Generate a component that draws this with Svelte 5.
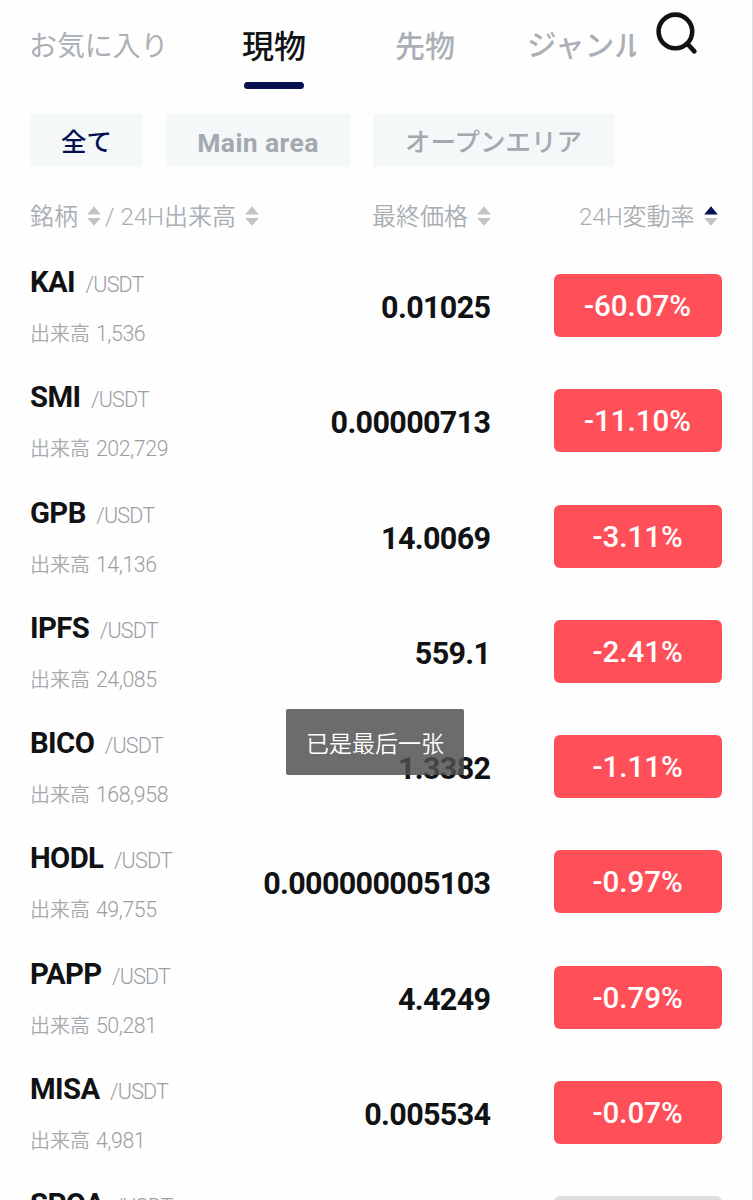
<script>
  const rows = [
    { name: 'KAI', volume: '1,536', price: '0.01025', change: '-60.07%' },
    { name: 'SMI', volume: '202,729', price: '0.00000713', change: '-11.10%' },
    { name: 'GPB', volume: '14,136', price: '14.0069', change: '-3.11%' },
    { name: 'IPFS', volume: '24,085', price: '559.1', change: '-2.41%' },
    { name: 'BICO', volume: '168,958', price: '1.3382', change: '-1.11%' },
    { name: 'HODL', volume: '49,755', price: '0.000000005103', change: '-0.97%' },
    { name: 'PAPP', volume: '50,281', price: '4.4249', change: '-0.79%' },
    { name: 'MISA', volume: '4,981', price: '0.005534', change: '-0.07%' },
    { name: 'SPOA', volume: '', price: '', change: '', flat: true }
  ];
</script>

{#snippet sort(active)}
  <svg class="sort" class:active width="14" height="20" viewBox="0 0 14 20">
    <path class="up" d="M7 0.2 L13.8 8.5 H0.2 Z" />
    <path d="M0.2 12 H13.8 L7 19.8 Z" />
  </svg>
{/snippet}

<div class="page">
  <header>
    <nav>
      <span class="tab fav">お気に入り</span>
      <span class="tab current">現物</span>
      <span class="tab futures">先物</span>
      <span class="tab genre">ジャンル</span>
    </nav>
    <svg class="search" width="44" height="44" viewBox="0 0 44 44">
      <circle cx="20.4" cy="20.4" r="16.8" />
      <path d="M32 32.4 L39.4 40.4" />
    </svg>
  </header>

  <div class="chips">
    <span class="chip all">全て</span>
    <span class="chip main">Main area</span>
    <span class="chip open">オープンエリア</span>
  </div>

  <div class="columns">
    <div class="col first">
      <span>銘柄</span>{@render sort(false)}<span class="vol">/ 24H出来高</span>{@render sort(false)}
    </div>
    <div class="col second"><span>最終価格</span>{@render sort(false)}</div>
    <div class="col third"><span>24H変動率</span>{@render sort(true)}</div>
  </div>

  <main>
    {#each rows as row}
      <div class="row">
        <div class="pair">
          <div class="names"><b>{row.name}</b><span>/USDT</span></div>
          <div class="volume">出来高 <i>{row.volume}</i></div>
        </div>
        <div class="price">{row.price}</div>
        <div class="change" class:flat={row.flat}>{row.change}</div>
      </div>
    {/each}
  </main>

  <div class="toast">已是最后一张</div>
</div>

<style>
  :global(body) { margin: 0; background: #fefefe; }
  .page {
    position: relative;
    box-sizing: border-box;
    width: 753px;
    height: 1200px;
    overflow: hidden;
    background: #fefefe;
    border-right: 1px solid #dcdfe1;
    font-family: Roboto, "Noto Sans CJK JP", sans-serif;
    color: #111214;
    white-space: nowrap;
  }
  header { display: flex; height: 114px; }
  nav { display: flex; width: 636px; overflow: hidden; padding-left: 29px; box-sizing: border-box; }
  .tab { flex: none; line-height: 88px; font-family: "Noto Sans CJK JP", sans-serif; font-weight: 500; color: #abb0b6; }
  .fav { width: 213px; font-size: 27.9px; font-weight: 400; }
  .current { position: relative; width: 153px; font-size: 32px; color: #111214; }
  .current::after {
    content: ""; position: absolute; left: 2px; top: 82px; width: 60px; height: 7px;
    border-radius: 4px; background: #04104f;
  }
  .futures { width: 132px; font-size: 30px; }
  .genre { font-size: 29.6px; }
  .search { margin: 11px 0 0 19px; fill: none; stroke: #111214; stroke-width: 4.6; stroke-linecap: round; }

  .chips { display: flex; gap: 23px; height: 53px; padding-left: 30px; }
  .chip {
    box-sizing: border-box; height: 53px; line-height: 57px; text-align: center;
    font-size: 25.5px; font-weight: 500; color: #a2a9af; background: #f5f8f8;
  }
  .all { width: 113px; color: #04104f; }
  .main { width: 184px; font-size: 26.5px; font-weight: 700; letter-spacing: 0.4px; }
  .open { width: 241px; }

  .columns { display: flex; height: 96px; color: #a9aeb3; font-size: 24px; font-weight: 350; line-height: 98px; }
  .col { display: flex; align-items: center; height: 98px; }
  .col span { position: relative; top: 1px; }
  .first { width: 342px; padding-left: 30px; }
  .second { width: 207px; box-sizing: border-box; }
  .sort { margin-left: 9px; fill: #c2c5c7; }
  .active .up { fill: #04104f; }
  .vol { margin-left: 4px; }

  main { display: flex; flex-direction: column; }
  .row { display: flex; flex: none; height: 115.3px; padding-left: 30px; box-sizing: border-box; }
  .pair { width: 190px; }
  .names { display: flex; align-items: baseline; height: 51px; line-height: 39px; gap: 10.5px; }
  .names b { font-size: 29.3px; letter-spacing: -0.6px; }
  .names span { font-size: 21.5px; font-weight: 300; letter-spacing: -0.8px; color: #9a9fa4; }
  .volume { font-size: 20px; font-weight: 350; line-height: 40px; color: #a5aaaf; }
  .volume i { font-style: normal; font-size: 21.3px; font-weight: 300; letter-spacing: -0.4px; margin-left: 1px; color: #999ea3; }
  .price { width: 270.4px; margin-right: 0.6px; text-align: right; font-size: 30.5px; font-weight: 700; letter-spacing: -0.65px; line-height: 89px; }
  .change {
    width: 168px; height: 63px; margin: 11px 0 0 62.6px; border-radius: 6px; background: #ff5059;
    color: #fff; text-align: center; line-height: 65px; font-size: 29.5px; font-weight: 500;
  }
  .flat { background: #dcdee2; }

  .toast {
    position: absolute; left: 286px; top: 709px; width: 178px; height: 66px; border-radius: 2px;
    background: rgba(80, 80, 80, 0.84); color: #fff; text-align: center;
    font: 350 23px/66px "Noto Sans CJK SC", sans-serif;
  }
</style>
